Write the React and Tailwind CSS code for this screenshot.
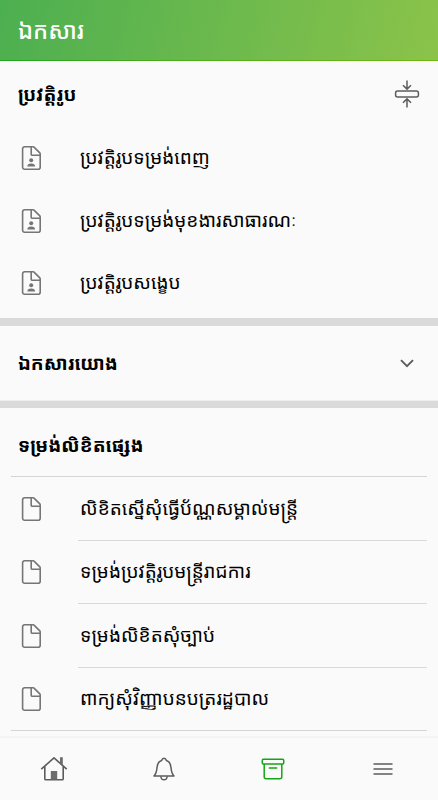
const profileForms = [
    'ប្រវត្តិរូបទម្រង់ពេញ',
    'ប្រវត្តិរូបទម្រង់មុខងារសាធារណៈ',
    'ប្រវត្តិរូបសង្ខេប',
];
const letterForms = [
    'លិខិតស្នើសុំធ្វើប័ណ្ណសម្គាល់មន្ត្រី',
    'ទម្រង់ប្រវត្តិរូបមន្ត្រីរាជការ',
    'ទម្រង់លិខិតសុំច្បាប់',
    'ពាក្យសុំវិញ្ញាបនបត្ររដ្ឋបាល',
];
export default function App() {
    return (<div className="flex h-[800px] w-full flex-col overflow-hidden bg-[#fafafa] font-['Noto_Sans_Khmer','Noto_Sans',sans-serif] text-black">
      <header className="h-[61px] shrink-0 bg-linear-to-r from-[#1ca51c] to-[#72b80c] pb-px">
        <div className="flex h-full items-center bg-[linear-gradient(105deg,#4caf50,#8bc34a)] pt-px pl-[18px]">
          <h1 className="text-[23.3px] leading-none font-medium whitespace-nowrap text-white">ឯកសារ</h1>
        </div>
      </header>

      <main className="flex min-h-0 flex-1 flex-col">
        <section className="h-[257px] shrink-0">
          <div className="flex h-[66px] items-center justify-between pr-[18px] pl-[18px]">
            <Heading>ប្រវត្តិរូប</Heading>
            <CollapseIcon />
          </div>
          {profileForms.map((label) => (<Row key={label} person className="h-[62.4px]">{label}</Row>))}
        </section>

        <div className="h-2 shrink-0 bg-[#dadada]"/>

        <section className="flex h-[74px] shrink-0 items-center justify-between pr-6 pl-[18px]">
          <Heading>ឯកសារយោង</Heading>
          <svg width="14" height="9" viewBox="0 0 14 9" fill="none" stroke="#5c5c5c" strokeWidth="1.9">
            <path d="M1 1.2 7 7.2 13 1.2"/>
          </svg>
        </section>

        <div className="h-2 shrink-0 border-t border-[#ededed] bg-[#dadada]"/>

        <section className="shrink-0">
          <div className="flex h-[68px] items-center pt-1.5 pl-[18px]">
            <Heading>ទម្រង់លិខិតផ្សេង</Heading>
          </div>
          <div className="mx-[11px] h-px bg-[#d4d4d4]"/>
          {letterForms.map((label, i) => (<div key={label}>
              <Row className="h-[62.5px] pt-px">{label}</Row>
              <div className={i === letterForms.length - 1 ? 'mx-[11px] h-px bg-[#d4d4d4]' : 'mr-[11px] ml-[78px] h-px bg-[#d9d9d9]'}/>
            </div>))}
        </section>
      </main>

      <nav className="grid h-[64px] shrink-0 grid-cols-4 items-center justify-items-center border-t-2 border-[#f4f4f4] bg-[#fafafa]">
        <HomeIcon />
        <BellIcon />
        <ArchiveIcon />
        <svg width="20" height="14" viewBox="0 0 20 14" stroke="#5c5c5c" strokeWidth="1.7">
          <path d="M.5 2H19.5M.5 7H19.5M.5 12H19.5"/>
        </svg>
      </nav>
    </div>);
}
function Heading({ children }) {
    return <h2 className="text-[19px] leading-none font-bold whitespace-nowrap">{children}</h2>;
}
function Row({ children, person, className }) {
    return (<div className={`flex items-center pl-[21px] ${className}`}>
      <FileIcon person={person}/>
      <span className="ml-[38px] pb-px text-[19px] leading-none whitespace-nowrap">{children}</span>
    </div>);
}
function FileIcon({ person }) {
    return (<svg className="shrink-0" width="21" height="26" viewBox="0 0 21 26" fill="none" stroke="#757575" strokeWidth="1.6" strokeLinejoin="round">
      <path d="M12.2 1.8H3.6A2 2 0 0 0 1.6 3.8V22.2A2 2 0 0 0 3.6 24.2H17.2A2 2 0 0 0 19.2 22.2V8.9Q19.2 8.3 18.8 7.9L13 2.1Q12.7 1.8 12.2 1.8Z"/>
      <path d="M10.2 2V9.2Q10.2 10.3 11.3 10.3H19"/>
      {person && (<g fill="#757575" stroke="none">
          <circle cx="10.2" cy="15.2" r="2"/>
          <path d="M6.3 21.5C6.3 19.5 7.6 18.4 10.2 18.4S14.1 19.5 14.1 21.5Z"/>
        </g>)}
    </svg>);
}
function CollapseIcon() {
    return (<svg width="26" height="28" viewBox="0 0 26 28" fill="none" stroke="#5c5c5c" strokeWidth="1.5">
      <path d="M13 .5V8.5M9 5.2 13 9.1 17 5.2M13 27.5V19.5M9 22.8 13 18.9 17 22.8"/>
      <rect x="1.6" y="11" width="22.8" height="6" rx="2"/>
    </svg>);
}
function HomeIcon() {
    return (<svg className="mr-px" width="28" height="26" viewBox="0 0 28 26" fill="none" stroke="#5c5c5c" strokeWidth="1.6">
      <path d="M1.3 13.2 14 1.8 26.7 13.2" strokeLinejoin="round"/>
      <path d="M4.8 10.5V22.7Q4.8 23.8 5.9 23.8H22.1Q23.2 23.8 23.2 22.7V10.5"/>
      <path d="M20 1.3H22.8V9.4L20 6.9ZM10.8 15H17.2V23.6H10.8Z" fill="#6c6c6c" stroke="none"/>
    </svg>);
}
function BellIcon() {
    return (<svg width="22" height="24" viewBox="0 0 22 24" fill="none" stroke="#5c5c5c" strokeWidth="1.5" strokeLinejoin="round">
      <path d="M1 19H21C18.5 16.5 18.2 13.7 18 10.5C17.8 6.8 16.5 4.5 13.4 3.5C13 2 12.2 1.2 11 1.2S9 2 8.6 3.5C5.5 4.5 4.2 6.8 4 10.5C3.8 13.7 3.5 16.5 1 19Z"/>
      <path d="M7.8 19.2C8 21.5 9.3 22.8 11 22.8S14 21.5 14.2 19.2"/>
    </svg>);
}
function ArchiveIcon() {
    return (<svg className="mr-px" width="24" height="22" viewBox="0 0 24 22" fill="none" stroke="#13a513" strokeWidth="1.5">
      <rect x="1.3" y="1.3" width="21.4" height="4.6" rx="1"/>
      <path d="M3.2 6V18.7Q3.2 20.7 5.2 20.7H18.8Q20.8 20.7 20.8 18.7V6M7.8 10H16.2"/>
    </svg>);
}
